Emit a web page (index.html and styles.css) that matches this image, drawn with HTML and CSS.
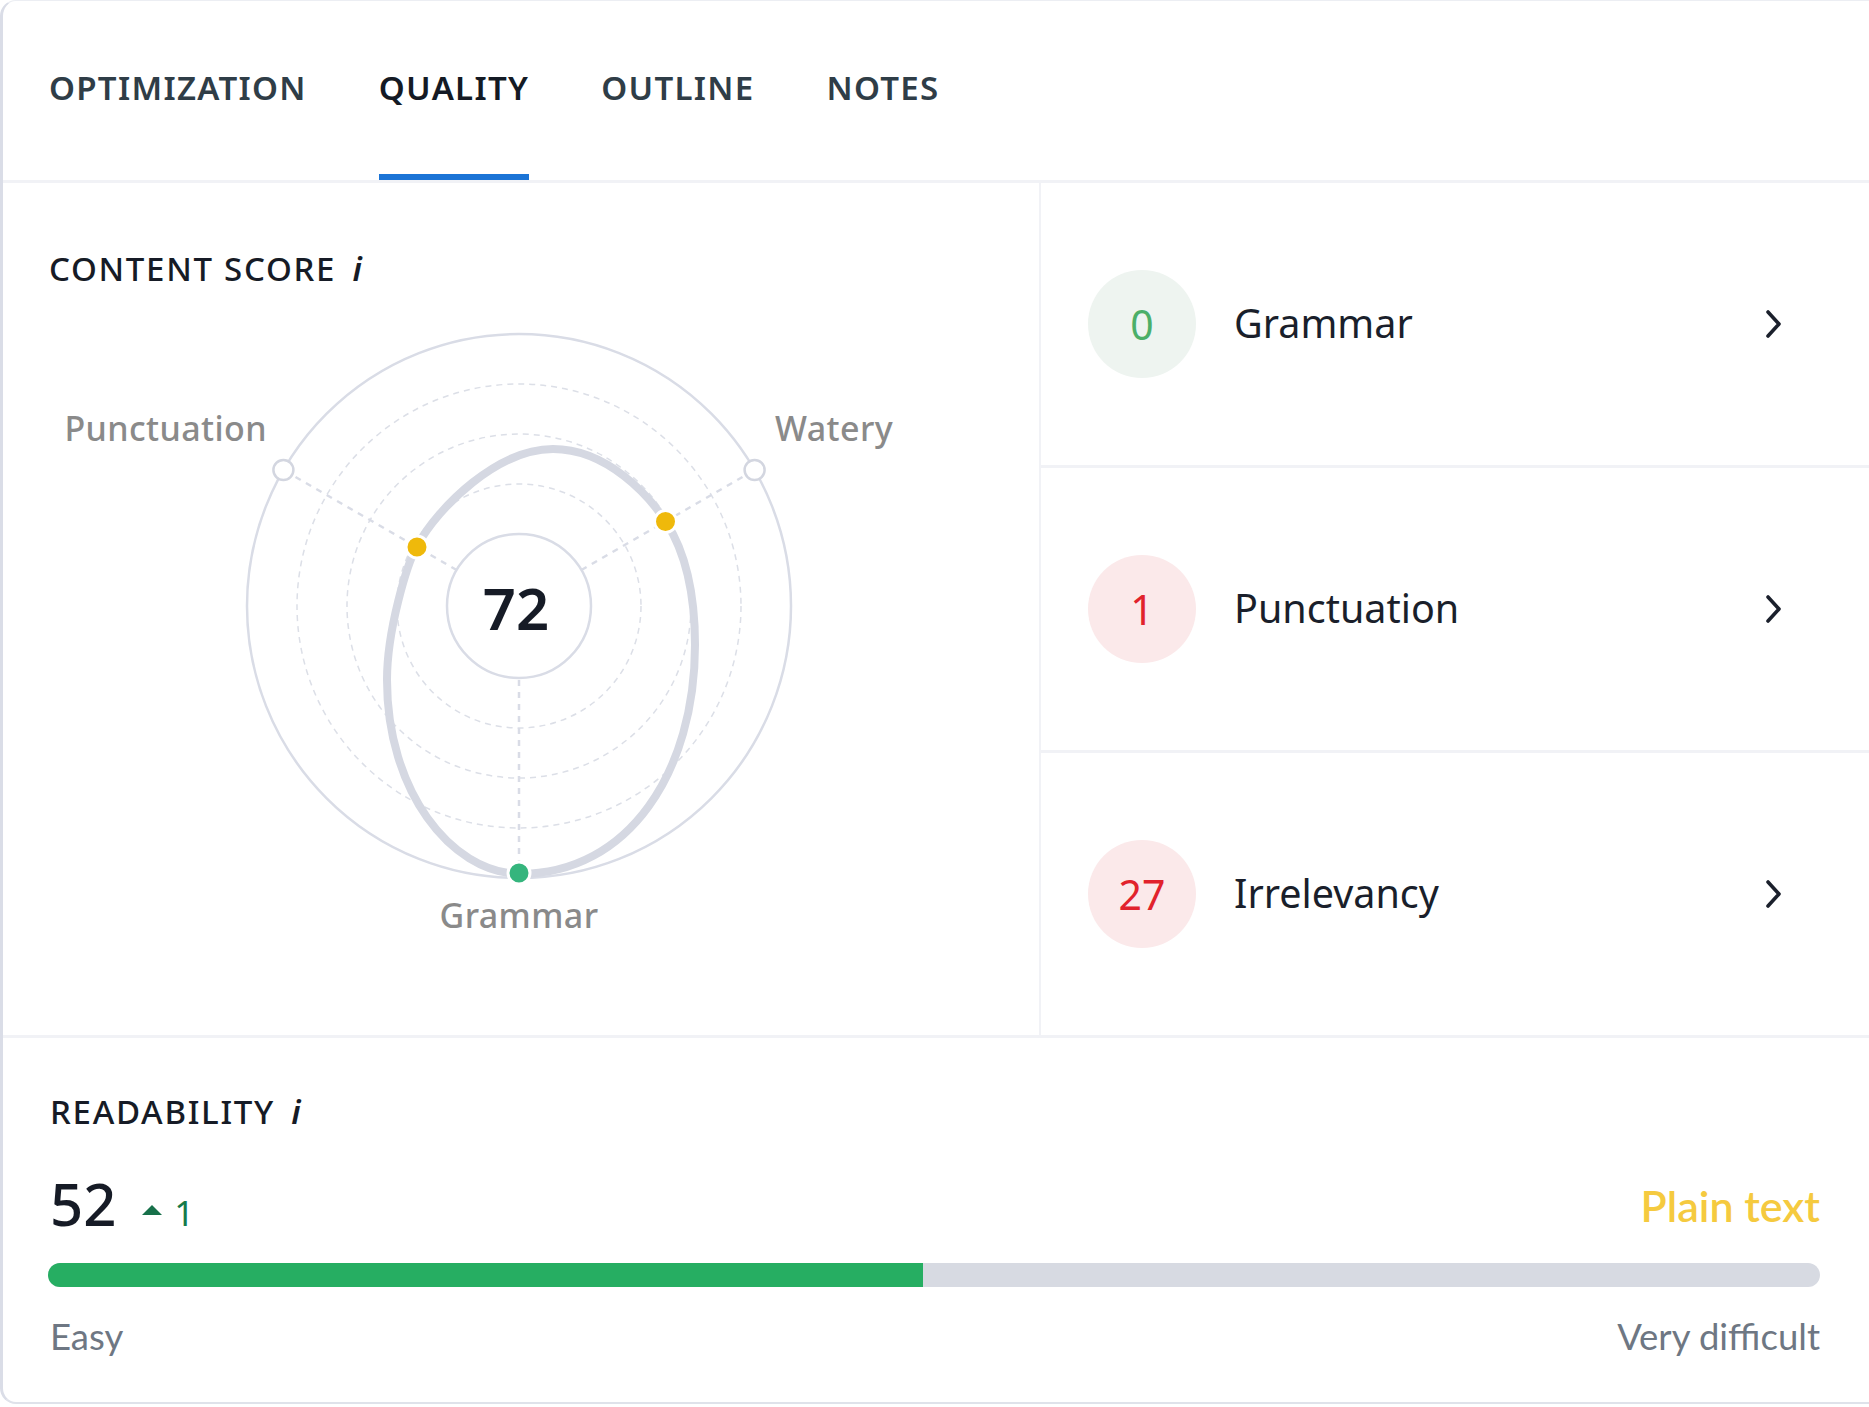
FILE: index.html
```html
<!DOCTYPE html>
<html lang="en">
<head>
<meta charset="utf-8">
<title>Quality</title>
<link rel="stylesheet" href="styles.css">
</head>
<body>
<div class="card">
  <nav class="tabs">
    <div class="tab">OPTIMIZATION</div>
    <div class="tab active">QUALITY</div>
    <div class="tab">OUTLINE</div>
    <div class="tab">NOTES</div>
  </nav>
  <div class="main">
    <section class="score">
      <h2 class="title">CONTENT SCORE <i class="info">i</i></h2>
      <svg class="radar" viewBox="2 289 1037 746" width="1037" height="746" xmlns="http://www.w3.org/2000/svg">
        <circle cx="519" cy="606" r="272" fill="none" stroke="#d9dce6" stroke-width="2.5"/>
        <circle cx="519" cy="606" r="222" fill="none" stroke="#dcdfe7" stroke-width="1.5" stroke-dasharray="6 5"/>
        <circle cx="519" cy="606" r="172" fill="none" stroke="#dcdfe7" stroke-width="1.5" stroke-dasharray="6 5"/>
        <circle cx="519" cy="606" r="122" fill="none" stroke="#dcdfe7" stroke-width="1.5" stroke-dasharray="6 5"/>
        <circle cx="519" cy="606" r="72" fill="#fff" stroke="#d9dce6" stroke-width="2.5"/>
        <line x1="456.6" y1="570" x2="283.4" y2="470" stroke="#d9dce6" stroke-width="2.5" stroke-dasharray="6 6"/>
        <line x1="581.4" y1="570" x2="754.6" y2="470" stroke="#d9dce6" stroke-width="2.5" stroke-dasharray="6 6"/>
        <line x1="519" y1="680" x2="519" y2="872" stroke="#d9dce6" stroke-width="2.5" stroke-dasharray="6 6"/>
        <path d="M519,874 C450,872 387,790 387,680 C387,630 407,564 417,546 C439,506 498,449 553,449 C608,449 650,497 666,522 C688,556 695,600 695,645 C695,770 630,874 519,874 Z" fill="none" stroke="#d5d8e2" stroke-width="8"/>
        <circle cx="283.4" cy="470" r="10" fill="#fff" stroke="#d3d6e0" stroke-width="2.5"/>
        <circle cx="754.6" cy="470" r="10" fill="#fff" stroke="#d3d6e0" stroke-width="2.5"/>
        <circle cx="417" cy="547" r="11" fill="#efb90b" stroke="#fff" stroke-width="3"/>
        <circle cx="665.5" cy="521.5" r="11" fill="#efb90b" stroke="#fff" stroke-width="3"/>
        <circle cx="519" cy="873" r="11" fill="#35b57d" stroke="#fff" stroke-width="3"/>
        <text class="axis" x="267" y="441" text-anchor="end">Punctuation</text>
        <text class="axis" x="775" y="441" text-anchor="start">Watery</text>
        <text class="axis" x="519" y="928" text-anchor="middle">Grammar</text>
        <text class="total" x="516" y="630" text-anchor="middle">72</text>
      </svg>
    </section>
    <section class="issues">
      <div class="row">
        <div class="badge good">0</div>
        <div class="label">Grammar</div>
        <svg class="chev" viewBox="0 0 20 30" width="20" height="30"><path d="M4 3 L15 15 L4 27" fill="none" stroke="#1b202c" stroke-width="3.6" stroke-linecap="round" stroke-linejoin="round"/></svg>
      </div>
      <div class="row">
        <div class="badge bad">1</div>
        <div class="label">Punctuation</div>
        <svg class="chev" viewBox="0 0 20 30" width="20" height="30"><path d="M4 3 L15 15 L4 27" fill="none" stroke="#1b202c" stroke-width="3.6" stroke-linecap="round" stroke-linejoin="round"/></svg>
      </div>
      <div class="row">
        <div class="badge bad">27</div>
        <div class="label">Irrelevancy</div>
        <svg class="chev" viewBox="0 0 20 30" width="20" height="30"><path d="M4 3 L15 15 L4 27" fill="none" stroke="#1b202c" stroke-width="3.6" stroke-linecap="round" stroke-linejoin="round"/></svg>
      </div>
    </section>
  </div>
  <section class="readability">
    <h2 class="title">READABILITY <i class="info">i</i></h2>
    <div class="read-row">
      <span class="read-num">52</span>
      <svg class="tri" viewBox="0 0 20 10" width="20" height="10"><path d="M10 0 L20 10 L0 10 Z" fill="#17704a"/></svg>
      <span class="delta">1</span>
      <span class="kind">Plain text</span>
    </div>
    <div class="bar"><div class="fill" style="width:49.4%"></div></div>
    <div class="scale">
      <span>Easy</span>
      <span>Very difficult</span>
    </div>
  </section>
</div>
</body>
</html>
```

FILE: styles.css
```css
* { box-sizing: border-box; }

html, body {
  margin: 0;
  padding: 0;
  background: #ffffff;
}

body {
  font-family: "Noto Sans", "Open Sans", "DejaVu Sans", sans-serif;
  color: #161b26;
}

.card {
  width: 1869px;
  height: 1404px;
  border-left: 3px solid #dadde7;
  border-bottom: 2px solid #dfe2ea;
  border-top: 1px solid #eceef3;
  border-radius: 16px 0 0 16px;
  overflow: hidden;
  background: #fff;
}

/* Tabs */
.tabs {
  display: flex;
  gap: 72px;
  padding-left: 46px;
  border-bottom: 3px solid #f1f2f6;
}

.tab {
  padding-top: 67px;
  padding-bottom: 66px;
  line-height: 40px;
  font-size: 33px;
  font-weight: 600;
  letter-spacing: 1.3px;
  color: #2f3d47;
  border-bottom: 6px solid transparent;
}

.tab.active {
  color: #141a24;
  border-bottom-color: #1b74d6;
}

/* Main area */
.main {
  display: flex;
  height: 855px;
  border-bottom: 3px solid #f1f2f6;
}

.score {
  flex: 0 0 1038px;
  border-right: 2px solid #f1f2f6;
}

.title {
  margin: 0;
  padding-top: 66px;
  padding-left: 46px;
  font-size: 33px;
  line-height: 40px;
  font-weight: 500;
  letter-spacing: 1.7px;
  color: #161b26;
}

.info {
  font-style: italic;
  font-weight: 600;
  margin-left: 6px;
  letter-spacing: 0;
}

.radar {
  display: block;
  margin-left: -1px;
}

.axis {
  font-family: "Noto Sans", "Open Sans", sans-serif;
  font-size: 34px;
  font-weight: 500;
  letter-spacing: 0.4px;
  fill: #8a8a8a;
}

.total {
  font-family: "Noto Sans", "Open Sans", sans-serif;
  font-size: 58px;
  font-weight: 600;
  fill: #161b26;
}

/* Issues list */
.issues {
  flex: 1;
  display: flex;
  flex-direction: column;
}

.row {
  flex: 1;
  display: flex;
  align-items: center;
  padding-left: 47px;
  padding-right: 85px;
  border-bottom: 3px solid #f1f2f6;
}

.row:last-child {
  border-bottom: none;
}

.badge {
  width: 108px;
  height: 108px;
  border-radius: 50%;
  display: flex;
  align-items: center;
  justify-content: center;
  font-size: 41px;
  line-height: 1;
  margin-right: 38px;
}

.badge.good {
  background: #eef4f0;
  color: #4caf68;
}

.badge.bad {
  background: #fbe9ea;
  color: #e1222c;
}

.label {
  flex: 1;
  font-size: 39.5px;
  color: #1a1f2b;
  line-height: 1.2;
}

.chev {
  display: block;
}

/* Readability */
.readability {
  padding: 54px 49px 0 45px;
}

.readability .title {
  padding: 0 0 0 2px;
}

.read-row {
  display: flex;
  align-items: baseline;
  margin-top: 43px;
  height: 58px;
}

.read-num {
  font-size: 58px;
  line-height: 58px;
  font-weight: 500;
  color: #161b26;
  padding-left: 2px;
}

.tri {
  margin-left: 26px;
  margin-right: 12px;
  position: relative;
  top: -11px;
}

.delta {
  font-size: 35px;
  color: #157a4a;
}

.kind {
  margin-left: auto;
  position: relative;
  top: -4px;
  font-family: "Lato", "Noto Sans", sans-serif;
  font-size: 43px;
  font-weight: 600;
  color: #f5ca3f;
}

.bar {
  margin-top: 30px;
  height: 24px;
  border-radius: 12px;
  background: #d7dae2;
  overflow: hidden;
}

.fill {
  height: 100%;
  background: #26ae62;
}

.scale {
  display: flex;
  justify-content: space-between;
  margin-top: 29px;
  font-family: "Lato", "Noto Sans", sans-serif;
  font-size: 36.5px;
  line-height: 40px;
  color: #6e7783;
  padding-left: 2px;
}
```
